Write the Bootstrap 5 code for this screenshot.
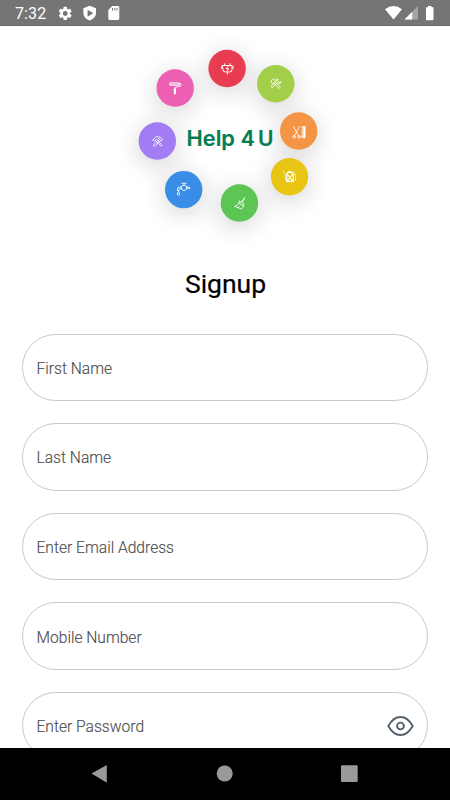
<!DOCTYPE html>
<html lang="en">
<head>
<meta charset="utf-8">
<meta name="viewport" content="width=device-width, initial-scale=1">
<title>Help 4 U - Signup</title>
<link href="https://cdn.jsdelivr.net/npm/bootstrap@5.3.0/dist/css/bootstrap.min.css" rel="stylesheet">
<style>
body{font-family:Roboto,"Liberation Sans",sans-serif;color:#000}
.screen{height:800px}
.status-bar{height:26px;background:#757575;border-bottom:1px solid #686868}
.clock{font-size:16px;line-height:26px;width:48px;padding:2px 0 0 15px;letter-spacing:.1px}
.page-body{min-height:0}
.logo-art{height:222px}
.logo-art svg,.status-bar svg,.system-nav svg,.eye-btn svg{display:block}
.signup-title{font-size:26.5px;line-height:32px;margin:20px 0 33.5px;padding-left:1px;font-weight:400;-webkit-text-stroke:.2px #000}
.fields{padding:0 22px;gap:22.1px}
.field-pill{height:67.5px;border:1px solid #c8c8c8;border-radius:34px}
.field-pill .form-control{font-size:15.6px;font-weight:300;padding:3px 0 0 13.5px;height:100%;color:#333}
.field-pill .form-control::placeholder{color:#3c3c3c;opacity:1;-webkit-text-stroke:.15px #777}
.eye-btn{padding:0 13px 0 0}
.system-nav{height:52.4px}
</style>
</head>
<body>
<div class="screen d-flex flex-column overflow-hidden bg-white">
  <header class="status-bar d-flex align-items-center flex-shrink-0 text-white">
    <span class="clock">7:32</span>
    <svg width="402" height="26" viewBox="48 0 402 26" fill="#fff">
      <g transform="translate(57 5.2) scale(.685)"><path fill-rule="evenodd" d="M19.14 12.94a7 7 0 0 0 0-1.88l2.03-1.58a.5.5 0 0 0 .12-.61l-1.92-3.32a.5.5 0 0 0-.59-.22l-2.39.96a7 7 0 0 0-1.62-.94l-.36-2.54A.5.5 0 0 0 13.93 2.4h-3.84a.5.5 0 0 0-.47.41l-.36 2.54a7 7 0 0 0-1.62.94l-2.39-.96a.5.5 0 0 0-.59.22L2.74 8.87a.5.5 0 0 0 .12.61l2.03 1.58a7 7 0 0 0 0 1.88l-2.03 1.58a.5.5 0 0 0-.12.61l1.92 3.32c.12.22.37.29.59.22l2.39-.96c.5.38 1.03.7 1.62.94l.36 2.54c.05.24.24.41.47.41h3.84c.24 0 .44-.17.47-.41l.36-2.54a7 7 0 0 0 1.62-.94l2.39.96c.22.08.47 0 .59-.22l1.92-3.32a.5.5 0 0 0-.12-.61zM12 15.6a3.6 3.6 0 1 1 0-7.2 3.6 3.6 0 0 1 0 7.2z"/></g>
      <path fill-rule="evenodd" d="M89.7 5.8l6.3 2.5v4.900c0 3.300-2.800 6.100-6.300 7.300-3.500-1.200-6.300-4-6.300-7.300V8.300zM87.600 9.700v7l5.600-3.500z"/>
      <path fill-rule="evenodd" d="M112.300 6h5.600q1.400 0 1.400 1.400v11.100q0 1.400-1.400 1.400h-8.200q-1.400 0-1.400-1.400V10zM112 8v2.500h1V8zm2.300 0v2.500h1V8zm2.200 0v2.500h1V8z"/>
      <path d="M385 9.200Q393.500 3 402 9.200L393.500 19.500z"/>
      <path d="M418 6v13.500h-13.500z" opacity=".35"/><path d="M412.200 11.800v7.700h-7.700z"/>
      <path d="M428 6h3.500v1.300h2v12.200q0 .7-.7.700h-6.100q-.7 0-.7-.7V7.300h2z"/>
    </svg>
  </header>

  <main class="page-body flex-grow-1 overflow-hidden">
    <div class="logo-art">
      <svg width="450" height="222" viewBox="0 26 450 222" role="img" aria-label="Help 4 U">
        <defs>
          <filter id="halo" x="-100%" y="-100%" width="300%" height="300%"><feGaussianBlur stdDeviation="12"/></filter>
        </defs>
        <g fill="#000" opacity=".16" filter="url(#halo)">
          <circle cx="175" cy="93" r="20"/><circle cx="227" cy="73" r="20"/><circle cx="276" cy="89" r="20"/><circle cx="298" cy="136" r="20"/>
          <circle cx="289" cy="182" r="20"/><circle cx="239" cy="208" r="20"/><circle cx="184" cy="194" r="20"/><circle cx="157" cy="146" r="20"/>
        </g>
        <circle cx="175.200" cy="88" r="18.700" fill="#ed5fb2"/>
        <circle cx="227.100" cy="68.500" r="18.700" fill="#e83c50"/>
        <circle cx="275.800" cy="83.700" r="18.700" fill="#a3ce49"/>
        <circle cx="298.700" cy="131" r="18.700" fill="#f49445"/>
        <circle cx="289.500" cy="176.700" r="18.700" fill="#e8c515"/>
        <circle cx="239.400" cy="203" r="18.700" fill="#5cc554"/>
        <circle cx="183.700" cy="189.600" r="18.700" fill="#398de6"/>
        <circle cx="157.300" cy="141" r="18.700" fill="#a27cf2"/>
        <g fill="none" stroke="#fff" stroke-width=".85" stroke-linecap="round" stroke-linejoin="round">
          <!-- paint roller -->
          <path d="M170.300 82.800h8.800v2.500h-8.800zM170.300 84.100h8.800M179.300 83.600h1.500v2.400l-5.900 1.500v1.500"/><path d="M174.900 89.300v4.200" stroke-width="2.200"/>
          <!-- electric plug -->
          <path stroke-width="1" d="M222.800 65.500h9.200v4q0 2.500-2.500 2.500h-4.200q-2.500 0-2.500-2.500zM224.700 65.200v-1.500M230 65.200v-1.500M227.400 72.300v2M221.800 66.300v2.200M233 66.300v2.200M228 66.500l-1.700 2.300h2.400l-1.600 2.200"/>
          <!-- wrench and hammer -->
          <path stroke-width=".8" d="M271.300 80.700l2.200-1.900 2 1.800-.4 1.500 5.300 4.900-1.300 1.500-5.200-5.100-1.200.4zM280.700 81.800l-1.800.6-1.500-1.500.8-1.800-2 .3-.5 2.500-4.800 4.500 1.200 1.500 5-4.700 2.500.2z"/>
          <path stroke-width=".8" transform="translate(-118.300 57.500)" d="M271.300 82.500l3-3.200 2.200-.4M271.300 82.500l1.600 1 2-1.700 5.500 5.500-1.200 1.400-5.300-5.600M280.800 82l-2.400-2.700-2 1.500 2.700 2.400zM277 82.500l-5.400 5 1.200 1.400 5.600-5.200"/>
          <!-- scissors and comb -->
          <path d="M293.600 126.500l4.600 9M299.300 126.500l-4.500 9"/><circle cx="294" cy="136.800" r="1.300"/><circle cx="299" cy="136.800" r="1.300"/><path d="M304.400 126v12.300" stroke-width="2.200" stroke-linecap="butt"/><path d="M302.500 126.200v12" stroke-width="1.800" stroke-dasharray=".7 .4" stroke-linecap="butt"/>
          <!-- laundry tools -->
          <path stroke-width="1.200" d="M287.700 172.500h4.600l1 1.500v7.500h-6.600V174zM287.300 174l5.400 7.500M292.700 174l-5.400 7.500M288.700 171.800h2.600"/><path stroke-width=".6" d="M283.700 171.200l.8 2.200 1.700 4M285.200 178l1 2.800M293.500 171.500l1.700 2.500.6 3.500-.6 3"/>
          <!-- broom -->
          <path d="M244.500 198l-2.600 4" stroke-width="1.200"/><path d="M239.500 201.300l4.300 2.500c0 3-1.200 4.500-2.600 5.100l-6.700-2.500c2-.5 4.100-2 5-5.100zM238.400 203.100l4.700 2.600M238 207.700l1-1.300"/>
          <!-- tap and drop -->
          <circle cx="184" cy="187.800" r="2.700"/><path d="M184 185v-1.700M181.700 183.300h4.600M186.700 187h2.300l1.200.8-1.200.8h-2.300M181.300 187h-2q-1.800 0-1.800 2v1.500h1.600v-1.200q0-.7.800-.7h1.400"/><path d="M178.500 191.700q-2.500 3.300 0 3.500 2.500-.2 0-3.500z"/>
        </g>
        <g font-family="Inter, sans-serif" font-size="21" font-weight="600" fill="#067c50" stroke="#067c50" stroke-width=".2">
          <text y="145.500"><tspan x="186.600" textLength="48.300" lengthAdjust="spacingAndGlyphs">Help</tspan> <tspan x="240.800">4</tspan> <tspan x="258">U</tspan></text>
        </g>
      </svg>
    </div>

    <h1 class="signup-title text-center">Signup</h1>

    <form class="fields d-flex flex-column">
      <div class="field-pill flex-shrink-0"><input class="form-control bg-transparent border-0 shadow-none" type="text" placeholder="First Name" aria-label="First Name"></div>
      <div class="field-pill flex-shrink-0"><input class="form-control bg-transparent border-0 shadow-none" type="text" placeholder="Last Name" aria-label="Last Name"></div>
      <div class="field-pill flex-shrink-0"><input class="form-control bg-transparent border-0 shadow-none" type="email" placeholder="Enter Email Address" aria-label="Enter Email Address"></div>
      <div class="field-pill flex-shrink-0"><input class="form-control bg-transparent border-0 shadow-none" type="tel" placeholder="Mobile Number" aria-label="Mobile Number"></div>
      <div class="field-pill flex-shrink-0 d-flex align-items-center">
        <input class="form-control bg-transparent border-0 shadow-none" type="password" placeholder="Enter Password" aria-label="Enter Password">
        <button class="eye-btn btn border-0" type="button" aria-label="Show password">
          <svg width="27" height="22" viewBox="0 0 27 22" fill="none" stroke="#55626d" stroke-width="1.900" stroke-linejoin="round"><path d="M1.300 11Q6.300 2 13.500 2T25.700 11Q20.700 20 13.500 20T1.300 11z"/><circle cx="13.500" cy="11" r="3.400"/></svg>
        </button>
      </div>
    </form>
  </main>

  <nav class="system-nav bg-black flex-shrink-0">
    <svg width="450" height="52" viewBox="0 748 450 52" fill="#999">
      <path d="M91.500 773.500L106.800 765v17.700z"/><circle cx="224.700" cy="773.500" r="8"/><rect x="341" y="765.300" width="16.700" height="16.700" rx="1"/>
    </svg>
  </nav>
</div>
<script src="https://cdn.jsdelivr.net/npm/bootstrap@5.3.0/dist/js/bootstrap.bundle.min.js"></script>
</body>
</html>
